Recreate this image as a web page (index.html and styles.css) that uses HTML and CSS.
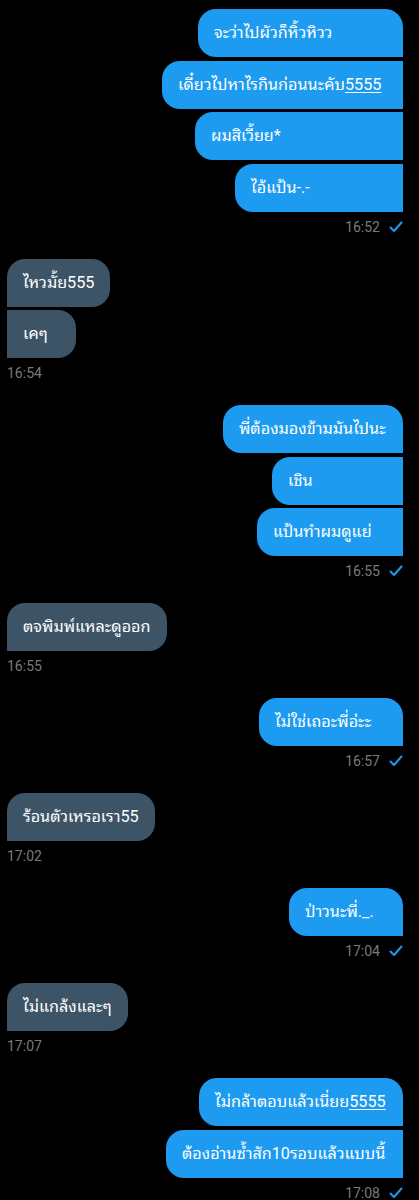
FILE: index.html
```html
<!DOCTYPE html>
<html lang="th">
<head>
    <meta charset="UTF-8">
    <meta name="viewport" content="width=device-width, initial-scale=1.0">
    <title>Messages</title>
    <link rel="stylesheet" href="styles.css">
</head>
<body>
    <div class="chat">
        <div class="group sent">
            <div class="bubble w205">จะว่าไปผัวก็หิ้วหิวว</div>
            <div class="bubble w241">เดี๋ยวไปหาไรกินก่อนนะคับ<u>5555</u></div>
            <div class="bubble w208">ผมสิเวี้ยย*</div>
            <div class="bubble w168">ไอ้แป้น-.-</div>
            <div class="meta">
                <span class="time">16:52</span>
                <svg class="check" viewBox="0 0 14 12"><path d="M1.5 6.5 L5 10 L12.5 1.5"/></svg>
            </div>
        </div>

        <div class="group received">
            <div class="bubble w103">ไหวมั้ย555</div>
            <div class="bubble w69">เคๆ</div>
            <div class="meta"><span class="time">16:54</span></div>
        </div>

        <div class="group sent">
            <div class="bubble w180">พี่ต้องมองข้ามมันไปนะ</div>
            <div class="bubble w131">เชิน</div>
            <div class="bubble w146">แป้นทำผมดูแย่</div>
            <div class="meta">
                <span class="time">16:55</span>
                <svg class="check" viewBox="0 0 14 12"><path d="M1.5 6.5 L5 10 L12.5 1.5"/></svg>
            </div>
        </div>

        <div class="group received">
            <div class="bubble w160">ตจพิมพ์แหละดูออก</div>
            <div class="meta"><span class="time">16:55</span></div>
        </div>

        <div class="group sent">
            <div class="bubble w144">ไม่ใช่เถอะพี่อ่ะะ</div>
            <div class="meta">
                <span class="time">16:57</span>
                <svg class="check" viewBox="0 0 14 12"><path d="M1.5 6.5 L5 10 L12.5 1.5"/></svg>
            </div>
        </div>

        <div class="group received">
            <div class="bubble w148">ร้อนตัวเหรอเรา55</div>
            <div class="meta"><span class="time">17:02</span></div>
        </div>

        <div class="group sent">
            <div class="bubble w114">ป่าวนะพี่._.</div>
            <div class="meta">
                <span class="time">17:04</span>
                <svg class="check" viewBox="0 0 14 12"><path d="M1.5 6.5 L5 10 L12.5 1.5"/></svg>
            </div>
        </div>

        <div class="group received">
            <div class="bubble w121">ไม่แกล้งและๆ</div>
            <div class="meta"><span class="time">17:07</span></div>
        </div>

        <div class="group sent">
            <div class="bubble w204">ไม่กล้าตอบแล้วเนี่ยย<u>5555</u></div>
            <div class="bubble w237">ต้องอ่านซ้ำสัก10รอบแล้วแบบนี้</div>
            <div class="meta">
                <span class="time">17:08</span>
                <svg class="check" viewBox="0 0 14 12"><path d="M1.5 6.5 L5 10 L12.5 1.5"/></svg>
            </div>
        </div>
    </div>
</body>
</html>
```

FILE: styles.css
```css
body {
    margin: 0;
    background-color: #000;
    font-family: Roboto, "Noto Sans Thai Looped", "Noto Sans Thai UI", "Noto Sans Thai", "Noto Sans", sans-serif;
}

.chat {
    display: flex;
    flex-direction: column;
    gap: 22px;
    padding: 9px 16px 0 7px;
}

.group {
    display: flex;
    flex-direction: column;
    gap: 3.5px;
}

.group.sent {
    align-items: flex-end;
}

.group.received {
    align-items: flex-start;
}

.bubble {
    box-sizing: border-box;
    padding: 12px 16px;
    font-size: 16.2px;
    line-height: 24px;
    color: #fff;
    border-radius: 18px;
    white-space: nowrap;
}

.bubble u {
    text-underline-offset: 2px;
}

/* bubble widths as the app laid them out */
.w69 { min-width: 69px; }
.w103 { min-width: 103px; }
.w114 { min-width: 114px; }
.w121 { min-width: 121px; }
.w131 { min-width: 131px; }
.w144 { min-width: 144px; }
.w146 { min-width: 146px; }
.w148 { min-width: 148px; }
.w160 { min-width: 160px; }
.w168 { min-width: 168px; }
.w180 { min-width: 180px; }
.w204 { min-width: 204px; }
.w205 { min-width: 205px; }
.w208 { min-width: 208px; }
.w237 { min-width: 237px; }
.w241 { min-width: 241px; }

.sent .bubble {
    background-color: #1d9bf0;
    border-top-right-radius: 0;
    border-bottom-right-radius: 0;
}

.sent .bubble:first-child {
    border-top-right-radius: 18px;
}

.received .bubble {
    background-color: #3d5366;
    border-top-left-radius: 0;
    border-bottom-left-radius: 0;
}

.received .bubble:first-child {
    border-top-left-radius: 18px;
}

.meta {
    margin-top: 1.5px;
    display: flex;
    align-items: center;
    gap: 9px;
    font-size: 14px;
    line-height: 20px;
    color: #7a7a7a;
}

.check {
    width: 14px;
    height: 12px;
    fill: none;
    stroke: #1d9bf0;
    stroke-width: 2;
    stroke-linecap: round;
    stroke-linejoin: round;
}
```
